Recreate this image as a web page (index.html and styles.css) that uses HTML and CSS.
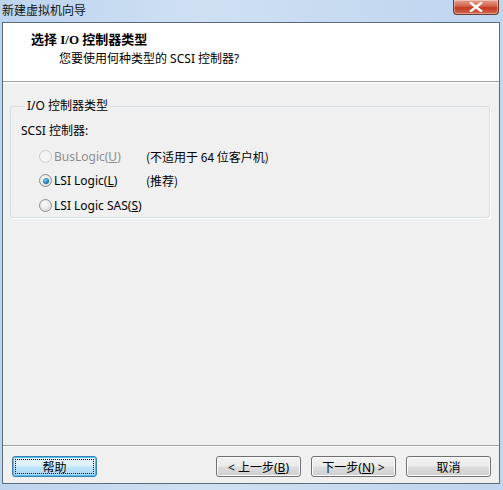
FILE: index.html
```html
<!DOCTYPE html>
<html lang="zh-CN">
<head>
    <meta charset="UTF-8">
    <title>新建虚拟机向导</title>
    <link rel="stylesheet" href="styles.css">
</head>
<body>
    <div class="window">
        <div class="titlebar">
            <span class="title">新建虚拟机向导</span>
            <span class="close">
                <svg width="14" height="10" viewBox="0 0 14 10"><path d="M2 1 L12 9 M12 1 L2 9" stroke="#fff" stroke-width="2.4" stroke-linecap="square"/></svg>
            </span>
        </div>
        <div class="client">
            <div class="header">
                <div class="head-title">选择 I/O 控制器类型</div>
                <div class="head-sub">您要使用何种类型的 SCSI 控制器?</div>
            </div>
            <div class="content">
                <fieldset class="group">
                    <legend>I/O 控制器类型</legend>
                    <div class="caption">SCSI 控制器:</div>
                    <div class="row disabled">
                        <span class="radio"></span>
                        <span class="label">BusLogic(<u>U</u>)</span>
                        <span class="note">(不适用于 64 位客户机)</span>
                    </div>
                    <div class="row">
                        <span class="radio checked"></span>
                        <span class="label">LSI Logic(<u>L</u>)</span>
                        <span class="note">(推荐)</span>
                    </div>
                    <div class="row">
                        <span class="radio"></span>
                        <span class="label">LSI Logic SAS(<u>S</u>)</span>
                    </div>
                </fieldset>
            </div>
            <div class="footer">
                <button class="btn focus"><span>帮助</span></button>
                <div class="spacer"></div>
                <button class="btn">&lt; 上一步(<u>B</u>)</button>
                <button class="btn">下一步(<u>N</u>) &gt;</button>
                <button class="btn">取消</button>
            </div>
        </div>
    </div>
</body>
</html>
```

FILE: styles.css
```css
* {
    box-sizing: border-box;
}
body {
    margin: 0;
    font-family: "Noto Sans", "Noto Sans CJK SC", sans-serif;
    font-size: 12px;
    color: #000;
}
.window {
    width: 503px;
    height: 490px;
    display: flex;
    flex-direction: column;
    padding: 0 3px 6px 2px;
    background: linear-gradient(90deg, #bcd4ee 0%, #cfe0f3 40%, #c6daf0 70%, #bfd6ef 100%);
}
.titlebar {
    height: 22px;
    display: flex;
    align-items: flex-start;
    justify-content: space-between;
    flex-shrink: 0;
}
.title {
    font-family: "Noto Sans CJK SC", sans-serif;
    font-size: 12px;
    line-height: 14px;
    margin-top: 3px;
    color: #111;
}
.close {
    width: 46px;
    height: 15px;
    margin-right: 1px;
    border: 1px solid #6d3a33;
    border-top: none;
    border-radius: 0 0 4px 4px;
    background: linear-gradient(#e5a393 0%, #d3614a 45%, #c4381f 55%, #d06a50 100%);
    display: flex;
    align-items: center;
    justify-content: center;
    box-shadow: inset 0 0 0 1px rgba(255,255,255,0.35);
}
.client {
    flex: 1;
    display: flex;
    flex-direction: column;
    background: #f0f0f0;
    border: 1px solid #5a6b7d;
}
.header {
    height: 59px;
    background: #fff;
    border-bottom: 1px solid #a0a0a0;
    box-shadow: 0 1px 0 #fff;
    padding: 9px 0 0 28px;
    flex-shrink: 0;
}
.head-title {
    font-family: "Liberation Serif", "Noto Sans CJK SC", serif;
    font-weight: bold;
    font-size: 13px;
    line-height: 15px;
}
.head-sub {
    font-family: "Noto Sans", "Noto Sans CJK SC", sans-serif;
    line-height: 14px;
    margin-top: 5px;
    padding-left: 28px;
}
.content {
    flex: 1;
    padding: 17px 9px 0 7px;
}
.group {
    margin: 0;
    padding: 11px 0 5px 10px;
    border: 1px solid #d5dfe5;
    border-radius: 3px;
    box-shadow: 1px 1px 0 #fff;
}
.group legend {
    padding: 0 2px;
    margin-left: 4px;
    line-height: 14px;
}
.caption {
    line-height: 14px;
    margin-bottom: 11px;
}
.row {
    display: flex;
    align-items: center;
    height: 14px;
    margin-bottom: 10.5px;
    padding-left: 18px;
}
.row:last-child {
    margin-bottom: 0;
}
.radio {
    width: 13px;
    height: 13px;
    border-radius: 50%;
    border: 1px solid #8e8f8f;
    background: radial-gradient(circle at 40% 35%, #fcfcfc 0%, #e6e6e6 55%, #cfcfcf 100%);
    display: flex;
    align-items: center;
    justify-content: center;
    margin-right: 2px;
    flex-shrink: 0;
}
.radio.checked::after {
    content: "";
    width: 6px;
    height: 6px;
    border-radius: 50%;
    background: radial-gradient(circle at 40% 35%, #7fd2f5 0%, #1a78b8 60%, #0d4e86 100%);
}
.row.disabled .radio {
    border-color: #cbcbcb;
    background: #f4f4f4;
}
.row.disabled .label {
    color: #8d8d8d;
}
.label {
    width: 92px;
    white-space: nowrap;
}
.note {
    font-family: "Noto Sans CJK SC", sans-serif;
}
.footer {
    height: 38px;
    flex-shrink: 0;
    border-top: 1px solid #a0a0a0;
    box-shadow: inset 0 1px 0 #fff;
    display: flex;
    align-items: flex-start;
    padding: 10px 8px 0 9px;
    gap: 10px;
}
.spacer {
    flex: 1;
}
.btn {
    width: 85px;
    height: 21px;
    padding: 0;
    font-family: "Noto Sans", "Noto Sans CJK SC", sans-serif;
    font-size: 12px;
    color: #000;
    border: 1px solid #707070;
    border-radius: 3px;
    background: linear-gradient(#f2f2f2 0%, #ebebeb 48%, #dddddd 52%, #cfcfcf 100%);
    box-shadow: inset 0 0 0 1px #fcfcfc;
}
.btn.focus {
    border-color: #3c7fb1;
    background: linear-gradient(#eaf6fd 0%, #d9f0fc 48%, #bee6fd 52%, #a7d9f5 100%);
    box-shadow: inset 0 0 0 1px #48c0ef;
    padding: 2px;
}
.btn.focus span {
    display: flex;
    align-items: center;
    justify-content: center;
    height: 100%;
    border: 1px dotted #000;
}
```
